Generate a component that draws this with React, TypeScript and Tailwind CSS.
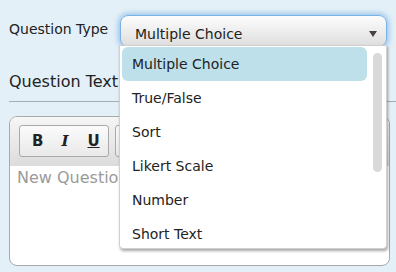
import React from "react";

const items = ["Multiple Choice", "True/False", "Sort", "Likert Scale", "Number", "Short Text"];

export default function App() {
  return (
    <div
      className="relative w-[396px] h-[272px] overflow-hidden bg-[#e4f0f7] text-[#222]"
      style={{ fontFamily: '"DejaVu Sans", Verdana, sans-serif' }}
    >
      <div className="flex items-center pl-[9px] pt-[10px] h-[42px] box-content">
        <div className="w-[111px] text-[14px] -mt-[3px]">Question Type</div>
        <div className="relative flex items-center w-[267px] h-[32px] rounded-[8px] border border-[#78b2e6] bg-gradient-to-b from-[#fdfdfd] to-[#dedede] shadow-[0_0_5px_2px_rgba(110,170,230,0.6)] pl-[14px] pt-[6px] text-[14px]">
          Multiple Choice
          <span className="absolute right-[9px] top-[15px] w-0 h-0 border-l-[4px] border-r-[4px] border-t-[6px] border-l-transparent border-r-transparent border-t-[#4a4040]" />
        </div>
      </div>
      <div className="pl-[9px] pt-[20px] text-[16px] leading-[20px]">Question Text</div>
      <div className="ml-[9px] mt-[9px] h-px bg-[#a8adb0]" />
      <div className="ml-[9px] mt-[14px] w-[381px] h-[150px] rounded-[8px] border border-[#a9a9a9] bg-white overflow-hidden">
        <div className="h-[49px] bg-gradient-to-b from-[#f6f6f6] to-[#dcdcdc] flex pl-[9px] pt-[8px] gap-[6px]">
          <div className="flex items-center w-[90px] h-[32px] rounded-[3px] border border-[#a9a9a9] bg-gradient-to-b from-[#fbfbfb] to-[#e9e9e9] text-[15px] font-bold">
            <span className="ml-[12px]">B</span>
            <span className="ml-[18px] italic" style={{ fontFamily: '"DejaVu Serif", serif' }}>I</span>
            <span className="ml-[19px] underline">U</span>
          </div>
          <div className="w-[90px] h-[32px] rounded-[3px] border border-[#a9a9a9] bg-gradient-to-b from-[#fbfbfb] to-[#e9e9e9]" />
        </div>
        <div className="pl-[7px] pt-0 text-[16px] text-[#9a9a9a]">New Question</div>
      </div>

      <div className="absolute left-[119px] top-[45px] w-[268px] h-[204px] bg-white rounded-b-[4px] border border-[#d0d0d0] shadow-[1px_2px_3px_rgba(0,0,0,0.35)] overflow-hidden">
        <div className="flex flex-col pl-[2px] pt-[1px]">
          {items.map((t, i) => (
            <div
              key={t}
              className={
                "h-[34px] w-[245px] flex items-center pl-[10px] text-[14px] rounded-[6px] " +
                (i === 0 ? "bg-[#bde0eb]" : "")
              }
            >
              {t}
            </div>
          ))}
        </div>
        <div className="absolute left-[253px] top-[7px] w-[9px] h-[119px] rounded-full bg-[#d9d9d9]" />
      </div>
    </div>
  );
}
